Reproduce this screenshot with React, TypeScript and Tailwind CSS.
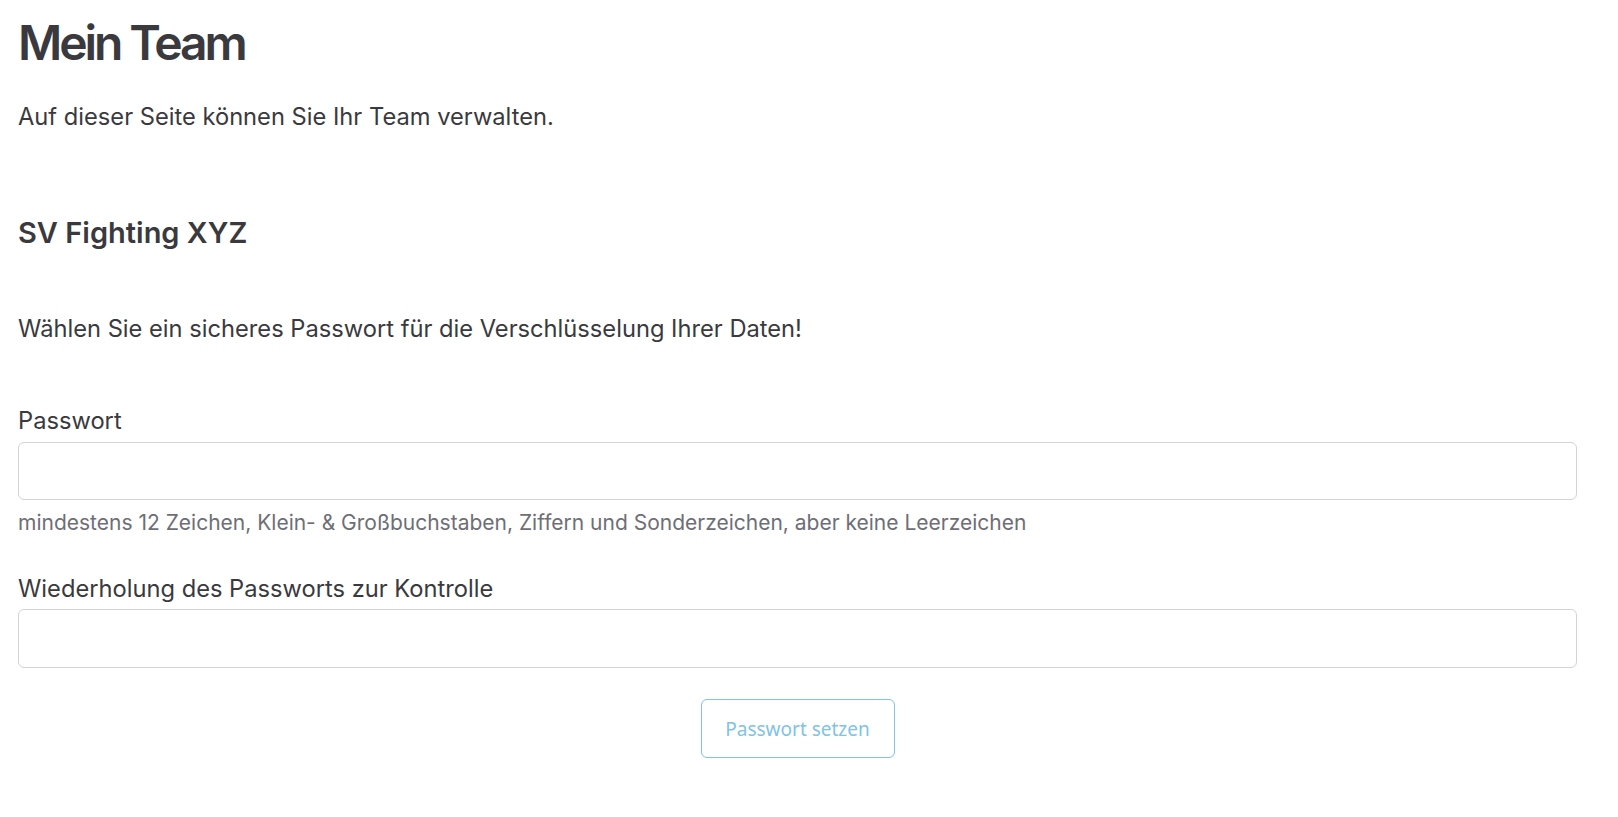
import React from "react";

export default function App() {
  return (
    <div className="min-h-[817px] bg-white pl-[18px] pr-[41px] font-['Inter',sans-serif] text-[#3a3a3e]">
      <h1 className="m-0 pt-[13px] text-[48px] font-semibold leading-[60px] tracking-[-0.064em]">Mein Team</h1>
      <p className="mt-[26px] text-[23.7px] leading-[36px]">Auf dieser Seite können Sie Ihr Team verwalten.</p>
      <h2 className="mt-[80px] text-[29px] font-semibold leading-[35px]">SV Fighting XYZ</h2>
      <p className="mt-[61px] text-[23.7px] leading-[36px]">Wählen Sie ein sicheres Passwort für die Verschlüsselung Ihrer Daten!</p>
      <form className="flex flex-col" onSubmit={(e) => e.preventDefault()}>
        <label className="mt-[56px] text-[23.7px] leading-[36px]">Passwort</label>
        <input
          type="password"
          className="mt-[3px] h-[58px] w-full rounded-[6px] border border-[#d4d4d8] bg-white px-3 outline-none"
        />
        <div className="mt-[7px] text-[21px] leading-[31px] text-[#6e6e76]">
          mindestens 12 Zeichen, Klein- &amp; Großbuchstaben, Ziffern und Sonderzeichen, aber keine Leerzeichen
        </div>
        <label className="mt-[33px] text-[23.7px] leading-[36px]">Wiederholung des Passworts zur Kontrolle</label>
        <input
          type="password"
          className="mt-[2px] h-[59px] w-full rounded-[6px] border border-[#d4d4d8] bg-white px-3 outline-none"
        />
        <div className="mt-[31px] flex justify-center">
          <button
            type="submit"
            className="h-[59px] w-[194px] rounded-[6px] border border-[#80c3e6] bg-white pt-[2px] font-['Noto_Sans',sans-serif] text-[19px] text-[#80c3e6]"
          >
            Passwort setzen
          </button>
        </div>
      </form>
    </div>
  );
}
